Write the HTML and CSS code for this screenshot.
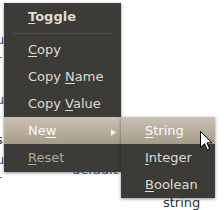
FILE: index.html
```html
<!DOCTYPE html>
<html>
<head>
<meta charset="utf-8">
<link rel="stylesheet" href="styles.css">
</head>
<body>
<div class="page">
  <div class="strip">
    <span class="red">i</span>
    <span class="blue">u</span>
    <span class="dark">r</span>
    <span class="red">l</span>
    <span class="blue">u</span>
    <span class="red">l</span>
    <span class="dark">s</span>
    <span class="blue">u</span>
    <span class="dark">r</span>
    <span class="red">l</span>
  </div>
  <div class="table">
    <div class="row"><span></span><span class="dark">default</span><span></span></div>
    <div class="row"><span></span><span class="dark">default</span><span></span></div>
    <div class="row"><span></span><span class="dark">default</span><span></span></div>
    <div class="row"><span></span><span class="dark">default</span><span></span></div>
    <div class="row"><span></span><span class="dark">default</span><span></span></div>
    <div class="row"><span></span><span class="dark">default</span><span class="dark">string</span></div>
    <div class="row"><span></span><span class="blue">default</span><span class="dark">string</span></div>
    <div class="row last"><span></span><span></span><span class="dark">string</span></div>
  </div>

  <div class="menu main-menu">
    <div class="item bold"><span><u>T</u>oggle</span></div>
    <div class="sep"></div>
    <div class="item"><span><u>C</u>opy</span></div>
    <div class="item"><span>Copy <u>N</u>ame</span></div>
    <div class="item"><span>Copy <u>V</u>alue</span></div>
    <div class="item active"><span>Ne<u>w</u></span>
      <svg class="arrow" width="5" height="7" viewBox="0 0 5 7"><path d="M0 0 L5 3.5 L0 7 Z" fill="#f4f2ee"/></svg>
    </div>
    <div class="item disabled"><span><u>R</u>eset</span></div>
  </div>

  <div class="menu sub-menu">
    <div class="item active"><span><u>S</u>tring</span></div>
    <div class="item"><span><u>I</u>nteger</span></div>
    <div class="item"><span><u>B</u>oolean</span></div>
  </div>

  <svg class="cursor" width="13" height="21" viewBox="0 0 13 21">
    <path d="M0.5 0.5 L0.5 16.5 L4.5 12.8 L7.2 19 L9.6 18 L7 11.8 L12 11.8 Z" fill="#ffffff" stroke="#000000" stroke-width="1" stroke-linejoin="round"/>
  </svg>
</div>
</body>
</html>
```

FILE: styles.css
```css
html, body {
  margin: 0;
  padding: 0;
  background: #ffffff;
}

.page {
  position: relative;
  width: 224px;
  height: 210px;
  overflow: hidden;
  display: flex;
  font-family: "DejaVu Sans", sans-serif;
  font-size: 13px;
}

.strip {
  width: 4px;
  flex-shrink: 0;
  overflow: hidden;
  display: flex;
  flex-direction: column;
  padding-top: 10px;
  line-height: 20px;
}

.strip span {
  display: block;
  flex-shrink: 0;
  height: 20px;
  margin-left: -4px;
}

.red { color: #c4302b; }
.blue { color: #2e5c9c; }
.dark { color: #333333; }

.table {
  display: flex;
  flex-direction: column;
  margin-top: -12px;
}

.row {
  display: grid;
  grid-template-columns: 68px 91px auto;
  flex-shrink: 0;
  height: 29px;
  line-height: 15px;
  white-space: nowrap;
}

.row.last {
  padding-top: 4px;
}

.menu {
  position: absolute;
  background: #3c3b37;
  color: #dfdbd2;
  display: flex;
  flex-direction: column;
  box-shadow: 0 1px 3px rgba(0, 0, 0, 0.45);
}

.main-menu {
  left: 4px;
  top: 3px;
  width: 117px;
  padding-bottom: 1px;
}

.sub-menu {
  left: 121px;
  top: 117px;
  width: 94px;
}

.item {
  height: 27px;
  display: flex;
  align-items: center;
  padding-left: 24px;
  white-space: nowrap;
}

.item u {
  text-decoration-thickness: 1px;
  text-underline-offset: 2px;
}

.bold {
  font-weight: bold;
}

.sep {
  height: 6px;
  display: flex;
  flex-direction: column;
  justify-content: center;
  margin: 0 8px;
}

.sep::before {
  content: "";
  display: block;
  height: 1px;
  background: #4f4c46;
}

.active {
  background: linear-gradient(#cbc2b3, #a59b8b);
  color: #fbfaf7;
}

.disabled {
  color: #b1a895;
}

.arrow {
  margin-left: auto;
  margin-right: 5px;
  margin-top: 3px;
}

.cursor {
  position: absolute;
  left: 200px;
  top: 131px;
}
```
